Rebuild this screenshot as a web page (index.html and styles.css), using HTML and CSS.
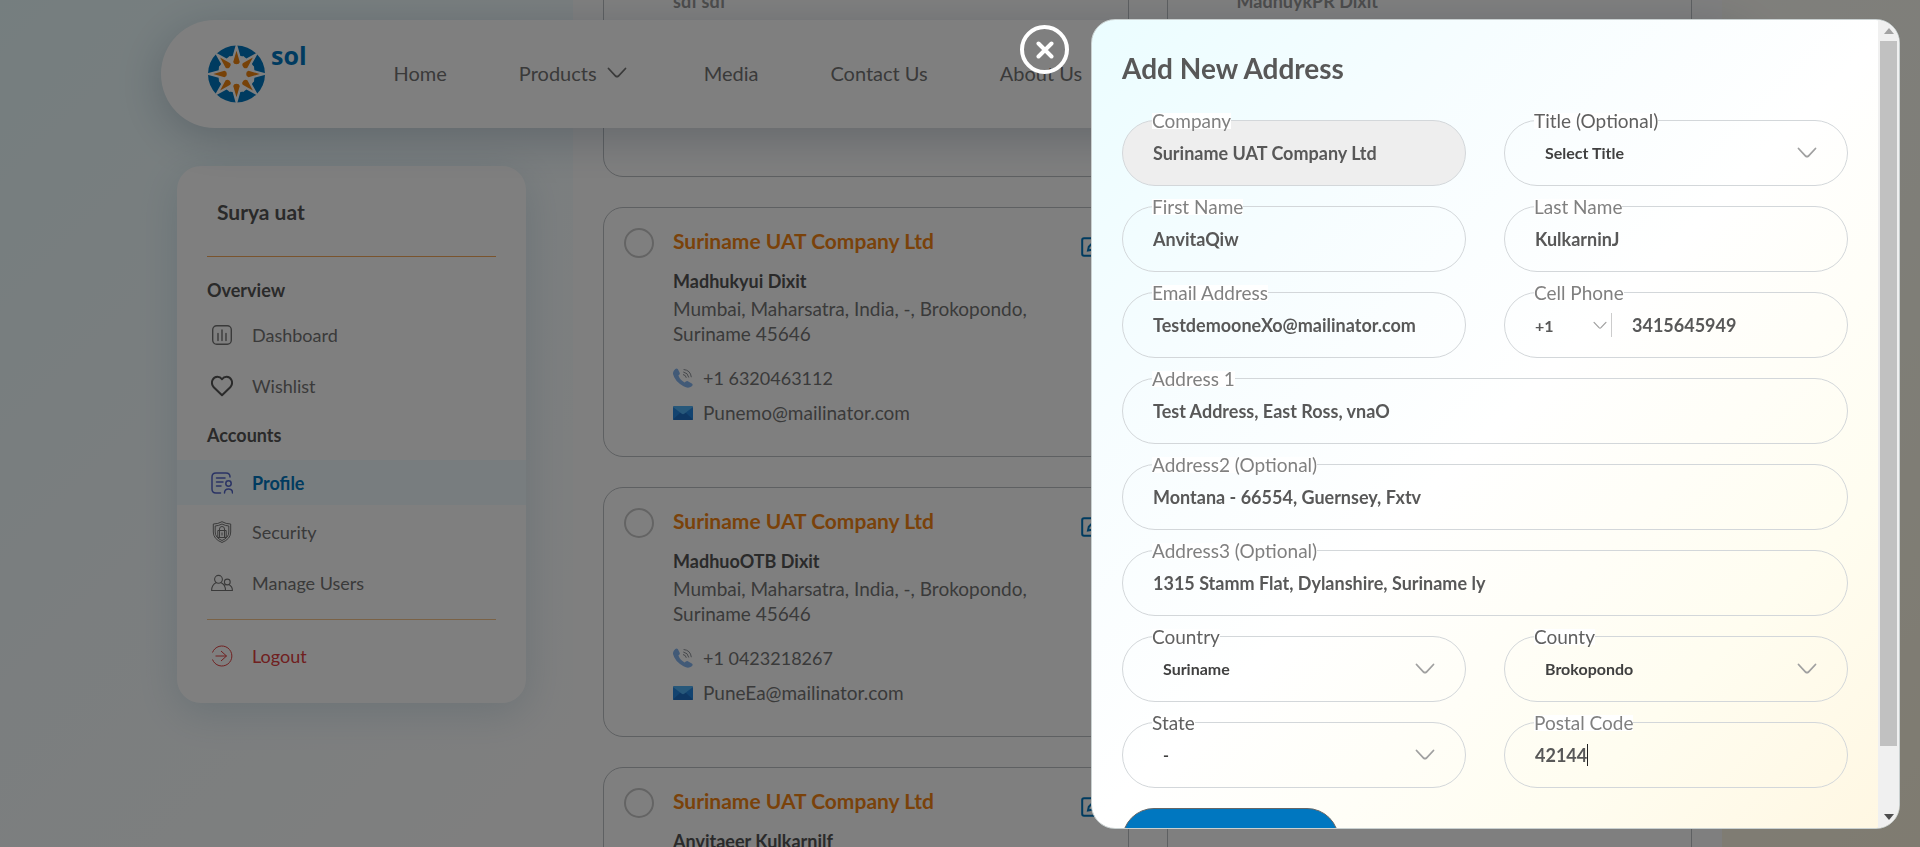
FILE: index.html
```html
<!DOCTYPE html>
<html lang="en">
<head>
<meta charset="utf-8">
<title>Sol - Address Book</title>
<link rel="stylesheet" href="styles.css">
</head>
<body>
<svg class="sprite" aria-hidden="true">
  <symbol id="chevron" viewBox="0 0 20 12"><path d="M1.5 1.5 L8.6 9 Q10 10.300 11.400 9 L18.500 1.500" fill="none" stroke="currentColor" stroke-width="1.800" stroke-linecap="round"/></symbol>
  <symbol id="phone" viewBox="0 0 20 20">
    <path d="M1 2.500 Q3 -.5 4.800 1 L6.800 5 Q7.200 6.400 5.400 7.600 Q7 12 11.600 14.600 Q13 12.700 14.400 13 L18.800 15.400 Q20.500 16.500 18.800 18.200 Q15.500 21 10.500 18.300 Q1.500 13 0 6 Q-.2 4 1 2.500Z" fill="#85b4ef"/>
    <path d="M10 6.500 Q12.800 7 13.300 9.800 M10.300 4 Q15 4.800 15.800 9.500 M10.600 1.500 Q17.500 2.200 18.300 9.200" fill="none" stroke="#8b8f96" stroke-width="1"/>
  </symbol>
  <symbol id="mail" viewBox="0 0 20 14">
    <rect width="20" height="14" rx="1.500" fill="#2487e0"/>
    <path d="M0 13.500 L8 6 h4 L20 13.500 Q19.500 14 18.500 14 h-17 Q.5 14 0 13.500Z" fill="#1c6fc4"/>
    <path d="M0 1 Q.5 0 1.500 0 h17 Q19.500 0 20 1 L11.200 7.800 Q10 8.600 8.800 7.800Z" fill="#4fb0f5"/>
  </symbol>
  <symbol id="edit" viewBox="0 0 22 20"><path d="M14 1.200 H3 Q1.200 1.200 1.200 3 V17 Q1.200 18.800 3 18.800 H17 Q18.800 18.800 18.800 17 V9" fill="none" stroke="#0077c0" stroke-width="2"/><path d="M7 13.500 L7.800 9.800 L16 1.500 L19 4.500 L10.800 12.800 Z" fill="none" stroke="#0077c0" stroke-width="2"/></symbol>
</svg>

<div class="page">
  <aside class="sidebar">
    <h2 class="user-name">Surya uat</h2>
    <nav class="side-nav">
      <h3 class="side-heading">Overview</h3>
      <a class="side-link" href="#">
        <svg class="side-icon" viewBox="0 0 22 22" fill="none" stroke="currentColor" stroke-width="1.400" stroke-linecap="round"><rect x="1.700" y="1.700" width="18.600" height="18.600" rx="4"/><path d="M7 9.500v7M11 6v10.500M15 9.500v7"/></svg>
        Dashboard</a>
      <a class="side-link" href="#">
        <svg class="side-icon" viewBox="0 0 22 22" fill="none" stroke="#555" stroke-width="2" stroke-linejoin="round"><path d="M11 20.300 L2.500 12 C-1 7.500 2 1.700 6.400 1.700 C8.500 1.700 10 2.700 11 4.200 C12 2.700 13.500 1.700 15.600 1.700 C20 1.700 23 7.500 19.500 12 Z"/></svg>
        Wishlist</a>
      <h3 class="side-heading">Accounts</h3>
      <a class="side-link side-link-active" href="#">
        <svg class="side-icon" viewBox="0 0 22 22" fill="none" stroke="#5567c9" stroke-width="1.500" stroke-linecap="round"><path d="M9.500 21H5 Q1 21 1 17V5 Q1 1 5 1H15 Q19 1 19 5"/><path d="M5.500 6H14M5.500 10H12M5.500 14H10"/><circle cx="17.500" cy="11.500" r="2.700"/><path d="M13.500 21 Q13.500 17 17.500 17 Q21.500 17 21.500 21"/></svg>
        Profile</a>
      <a class="side-link" href="#">
        <svg class="side-icon" viewBox="0 0 22 22" fill="none" stroke="currentColor" stroke-width="1"><path d="M11 .7 Q15 3 19.700 3 V11 Q19.700 18 11 21.500 Q2.300 18 2.300 11 V3 Q7 3 11 .7Z"/><path d="M11 3 Q14.500 4.800 17.800 5 V11 Q17.800 16.800 11 19.500 Q4.200 16.800 4.200 11 V5 Q7.500 4.800 11 3Z"/><path d="M6.800 9.500h8.400v7H6.800zM8.500 9.500V8Q8.500 5.500 11 5.500 Q13.500 5.500 13.500 8V9.500M8.500 9.500v7M13.500 9.500v7M11 11.500v3"/></svg>
        Security</a>
      <a class="side-link" href="#">
        <svg class="side-icon" viewBox="0 0 22 22" fill="none" stroke="currentColor" stroke-width="1.100"><circle cx="7.500" cy="7.300" r="3.900"/><circle cx="16.300" cy="10" r="2.900"/><path d="M5.300 10.500 Q.6 13 .6 18.500H21.400 Q21.400 14.500 17.800 12.600 M9.700 10.500 Q14.500 12.500 14.500 18.500 M14.900 12.600 L12.800 13.600"/></svg>
        Manage Users</a>
    </nav>
    <a class="side-link side-link-logout" href="#">
      <svg class="side-icon" viewBox="0 0 22 22" fill="none" stroke="currentColor" stroke-width="1"><path d="M1.500 7.500 A10 10 0 1 1 1.500 14.500M4.500 11H15.500M10 6 L15.500 11 L10 16"/></svg>
      Logout</a>
  </aside>

  <main class="panel">
    <article class="card">
      <input class="card-radio" type="radio" name="address" aria-label="sdf sdf">
      <div class="card-body">
        <h2 class="card-title">Suriname UAT Company Ltd</h2>
        <h3 class="card-name card-name-faded">sdf sdf</h3>
      </div>
    </article>
    <article class="card">
      <input class="card-radio" type="radio" name="address" aria-label="MadhuykPR Dixit">
      <div class="card-body">
        <h2 class="card-title">Suriname UAT Company Ltd</h2>
        <h3 class="card-name card-name-faded">MadhuykPR Dixit</h3>
      </div>
    </article>
    <article class="card">
      <input class="card-radio" type="radio" name="address" aria-label="Madhukyui Dixit">
      <div class="card-body">
        <h2 class="card-title">Suriname UAT Company Ltd</h2>
        <h3 class="card-name">Madhukyui Dixit</h3>
        <p class="card-address">Mumbai, Maharsatra, India, -, Brokopondo, Suriname 45646</p>
        <p class="card-contact card-phone"><svg class="phone-icon"><use href="#phone"/></svg>+1 6320463112</p>
        <p class="card-contact"><svg class="mail-icon"><use href="#mail"/></svg>Punemo@mailinator.com</p>
      </div>
      <button class="card-edit" type="button" aria-label="Edit"><svg class="edit-icon"><use href="#edit"/></svg></button>
    </article>
    <article class="card"></article>
    <article class="card">
      <input class="card-radio" type="radio" name="address" aria-label="MadhuoOTB Dixit">
      <div class="card-body">
        <h2 class="card-title">Suriname UAT Company Ltd</h2>
        <h3 class="card-name">MadhuoOTB Dixit</h3>
        <p class="card-address">Mumbai, Maharsatra, India, -, Brokopondo, Suriname 45646</p>
        <p class="card-contact card-phone"><svg class="phone-icon"><use href="#phone"/></svg>+1 0423218267</p>
        <p class="card-contact"><svg class="mail-icon"><use href="#mail"/></svg>PuneEa@mailinator.com</p>
      </div>
      <button class="card-edit" type="button" aria-label="Edit"><svg class="edit-icon"><use href="#edit"/></svg></button>
    </article>
    <article class="card"></article>
    <article class="card">
      <input class="card-radio" type="radio" name="address" aria-label="Anvitaeer Kulkarnilf">
      <div class="card-body">
        <h2 class="card-title">Suriname UAT Company Ltd</h2>
        <h3 class="card-name">Anvitaeer Kulkarnilf</h3>
      </div>
      <button class="card-edit" type="button" aria-label="Edit"><svg class="edit-icon"><use href="#edit"/></svg></button>
    </article>
    <article class="card"></article>
  </main>
</div>

<header class="header">
  <a class="logo" href="#">
    <svg class="logo-mark" viewBox="-30 -30 60 60" aria-hidden="true">
      <defs>
        <g id="ray">
          <path d="M0 -22 L12 -21.500 L8.500 -12 L0 -9 L-8.500 -12 L-12 -21.500Z" fill="none"/>
          <path d="M-.8 -30 H.8 L4 -18.500 L8 -18 L0 0 L-8 -18 L-4 -18.500Z" fill="#fff"/>
          <path d="M0 -24 L3.400 -12.500 Q3 -10 0 -10 Q-3 -10 -3.400 -12.500Z" fill="#ef8411"/>
        </g>
      </defs>
      <circle r="29.500" fill="#0077c0"/>
      <circle r="17.500" fill="#fff"/>
      <use href="#ray"/><use href="#ray" transform="rotate(45)"/><use href="#ray" transform="rotate(90)"/><use href="#ray" transform="rotate(135)"/>
      <use href="#ray" transform="rotate(180)"/><use href="#ray" transform="rotate(225)"/><use href="#ray" transform="rotate(270)"/><use href="#ray" transform="rotate(315)"/>
    </svg>
    <span class="logo-text">sol</span>
  </a>
  <nav class="main-nav">
    <a class="nav-link" href="#">Home</a>
    <a class="nav-link nav-link-menu" href="#">Products <svg class="nav-chevron"><use href="#chevron"/></svg></a>
    <a class="nav-link" href="#">Media</a>
    <a class="nav-link" href="#">Contact Us</a>
    <a class="nav-link" href="#">About Us</a>
  </nav>
</header>

<div class="overlay">
  <button class="close" type="button" aria-label="Close"><svg class="close-icon" viewBox="0 0 18 18"><path d="M2.500 2.500 15.500 15.500M15.500 2.500 2.500 15.500" stroke="#fff" stroke-width="4" stroke-linecap="round"/></svg></button>
  <section class="modal" role="dialog" aria-labelledby="modal-title">
    <form class="form">
      <h1 class="form-title" id="modal-title">Add New Address</h1>
      <div class="fields">
        <div class="field field-disabled">
          <label class="label" for="company">Company</label>
          <input class="input" id="company" value="Suriname UAT Company Ltd" disabled>
        </div>
        <div class="field">
          <label class="label label-dark" for="title">Title (Optional)</label>
          <select class="select" id="title"><option>Select Title</option></select>
          <svg class="select-chevron"><use href="#chevron"/></svg>
        </div>
        <div class="field">
          <label class="label" for="first">First Name</label>
          <input class="input" id="first" value="AnvitaQiw">
        </div>
        <div class="field">
          <label class="label" for="last">Last Name</label>
          <input class="input" id="last" value="KulkarninJ">
        </div>
        <div class="field">
          <label class="label" for="email">Email Address</label>
          <input class="input" id="email" value="TestdemooneXo@mailinator.com">
        </div>
        <div class="field">
          <label class="label" for="cell">Cell Phone</label>
          <div class="code">
            <select class="select select-code" aria-label="Country code"><option>+1</option></select>
            <svg class="code-chevron"><use href="#chevron"/></svg>
          </div>
          <input class="input input-phone" id="cell" value="3415645949">
        </div>
        <div class="field field-wide">
          <label class="label" for="a1">Address 1</label>
          <input class="input" id="a1" value="Test Address, East Ross, vnaO">
        </div>
        <div class="field field-wide">
          <label class="label" for="a2">Address2 (Optional)</label>
          <input class="input" id="a2" value="Montana - 66554, Guernsey, Fxtv">
        </div>
        <div class="field field-wide">
          <label class="label" for="a3">Address3 (Optional)</label>
          <input class="input" id="a3" value="1315 Stamm Flat, Dylanshire, Suriname ly">
        </div>
        <div class="field">
          <label class="label label-dark" for="country">Country</label>
          <select class="select" id="country"><option>Suriname</option></select>
          <svg class="select-chevron"><use href="#chevron"/></svg>
        </div>
        <div class="field">
          <label class="label label-dark" for="county">County</label>
          <select class="select" id="county"><option>Brokopondo</option></select>
          <svg class="select-chevron"><use href="#chevron"/></svg>
        </div>
        <div class="field">
          <label class="label label-dark" for="state">State</label>
          <select class="select" id="state"><option>-</option></select>
          <svg class="select-chevron"><use href="#chevron"/></svg>
        </div>
        <div class="field">
          <label class="label" for="postal">Postal Code</label>
          <input class="input" id="postal" value="42144">
          <span class="caret"></span>
        </div>
      </div>
      <button class="submit" type="submit" aria-label="Add address"></button>
    </form>
    <div class="scrollbar" aria-hidden="true">
      <svg class="scroll-arrow" viewBox="0 0 10 6"><path d="M5 0 10 6H0Z" fill="#a3a3a3"/></svg>
      <div class="scroll-track"><div class="scroll-thumb"></div></div>
      <svg class="scroll-arrow" viewBox="0 0 10 6"><path d="M0 0H10L5 6Z" fill="#4d4d4d"/></svg>
    </div>
  </section>
</div>
</body>
</html>
```
FILE: styles.css
```css
* {
  box-sizing: border-box;
}

body {
  margin: 0;
  height: 100vh;
  overflow: hidden;
  font-family: Lato, Carlito, sans-serif;
  font-size: 18px;
  color: #757575;
  background: linear-gradient(135deg, #ebfdff 0%, #f6fdff 25%, #fff 50%, #fffdf0 78%, #fff7e2 100%);
}

h1, h2, h3, p {
  margin: 0;
}

a {
  color: inherit;
  text-decoration: none;
}

button, input, select {
  font: inherit;
  color: inherit;
  border: 0;
  padding: 0;
  margin: 0;
  background: none;
}

.sprite {
  position: absolute;
  width: 0;
  height: 0;
}

.page {
  display: flex;
  align-items: flex-start;
  gap: 47px;
  height: 100vh;
  padding: 0 198px 0 177px;
  overflow: hidden;
}

/* Sidebar */
.sidebar {
  flex: 0 0 349px;
  margin-top: 166px;
  padding: 0 0 12px;
  border-radius: 24px;
  background: #fff;
  box-shadow: 0 10px 40px rgba(0, 80, 120, 0.14);
}

.user-name {
  margin: 0 30px;
  padding: 33px 10px 31px;
  border-bottom: 1px solid #f5a85a;
  font-size: 21px;
  line-height: 26px;
  color: #555;
}

.side-nav {
  display: flex;
  flex-direction: column;
}

.side-heading {
  margin: 22px 30px 8px;
  font-size: 18px;
  line-height: 22px;
  color: #555;
}

.side-link + .side-heading {
  margin: 13px 30px 14px;
}

.side-link {
  display: flex;
  align-items: center;
  gap: 19px;
  height: 51px;
  padding-left: 34px;
  font-size: 18px;
}

.side-link-active {
  height: 45px;
  margin-bottom: 1px;
  background: #f0faff;
  color: #0077c0;
  font-weight: bold;
}

.side-icon {
  width: 22px;
  height: 22px;
}

.side-link-logout {
  margin: 11px 30px 0;
  height: 72px;
  padding: 0 0 0 4px;
  border-top: 1px solid #f5c58c;
  color: #e04040;
}

/* Address list */
.panel {
  flex: 1;
  display: grid;
  grid-template-columns: 1fr 1fr;
  grid-auto-rows: 250px;
  gap: 30px 38px;
  margin-top: -73px;
  padding: 0 30px;
  background: #fff;
}

.card {
  display: flex;
  align-items: flex-start;
  gap: 19px;
  padding: 20px;
  border: 1px solid #bcc0c4;
  border-radius: 20px;
}

.card-radio {
  appearance: none;
  flex: 0 0 30px;
  height: 30px;
  border: 2px solid #c8c8c8;
  border-radius: 50%;
}

.card-body {
  flex: 1;
}

.card-title {
  font-size: 21px;
  line-height: 26px;
  color: #f58514;
}

.card-name {
  margin: 15px 0 3px;
  font-size: 18px;
  line-height: 24px;
  color: #555;
}

.card-name-faded {
  color: #999;
}

.card-address {
  max-width: 370px;
  margin-bottom: 14px;
  font-size: 19px;
  line-height: 25px;
}

.card-contact {
  display: flex;
  align-items: center;
  gap: 10px;
  height: 35px;
  font-size: 19px;
}

.card-phone {
  font-size: 18px;
}

.phone-icon {
  width: 20px;
  height: 20px;
}

.mail-icon {
  width: 20px;
  height: 14px;
}

.card-edit {
  padding: 9px 5px 0 0;
}

.edit-icon {
  display: block;
  width: 22px;
  height: 20px;
}

/* Header */
.header {
  position: absolute;
  top: 20px;
  left: 161px;
  right: 161px;
  display: flex;
  align-items: center;
  gap: 87px;
  height: 108px;
  padding-left: 46px;
  border-radius: 54px;
  background: #fff;
  box-shadow: 0 10px 45px rgba(20, 50, 80, 0.24);
}

.logo {
  display: flex;
  gap: 5px;
}

.logo-mark {
  width: 59px;
  height: 58px;
}

.logo-text {
  font: bold 25px/20px "Open Sans", sans-serif;
  color: #0077c0;
}

.main-nav {
  display: flex;
  gap: 72px;
  padding-bottom: 3px;
}

.nav-link {
  display: flex;
  align-items: center;
  gap: 10px;
  font-size: 20px;
  line-height: 26px;
}

.nav-link-menu {
  padding-right: 5px;
}

.nav-chevron {
  width: 20px;
  height: 12px;
}

/* Modal */
.overlay {
  position: fixed;
  inset: 0;
  display: flex;
  align-items: flex-start;
  justify-content: flex-end;
  gap: 22px;
  padding: 19px 20px 18px;
  background: rgba(0, 0, 0, 0.5);
}

.close {
  display: grid;
  place-items: center;
  width: 49px;
  height: 49px;
  margin-top: 6px;
  border: 4px solid #fff;
  border-radius: 50%;
}

.close-icon {
  width: 18px;
  height: 18px;
}

.modal {
  flex: 0 1 809px;
  display: flex;
  height: 100%;
  overflow: hidden;
  border: 1px solid #c9d0d0;
  border-radius: 24px;
  background: linear-gradient(135deg, #ebfdff 0%, #f6fdff 25%, #fff 50%, #fffdf0 78%, #fff7e2 100%);
}

.form {
  flex: 1;
  padding: 30px 30px 0;
}

.form-title {
  margin-bottom: 34px;
  font-size: 28px;
  line-height: 36px;
  color: #585858;
}

.fields {
  display: grid;
  grid-template-columns: repeat(2, minmax(0, 1fr));
  grid-auto-rows: 66px;
  gap: 20px 38px;
}

.field {
  position: relative;
  display: flex;
  align-items: center;
  padding: 0 30px;
  border: 1px solid #d3d7da;
  border-radius: 33px;
}

.field-wide {
  grid-column: span 2;
}

.field-disabled {
  background: #eee;
}

.label {
  position: absolute;
  top: -8px;
  left: 29px;
  font-size: 19px;
  line-height: 16px;
  color: #808080;
  background: #fff;
}

.label-dark {
  color: #606060;
}

.input {
  flex: 1;
  min-width: 0;
  font-size: 18px;
  font-weight: bold;
  line-height: 24px;
  color: #585858;
}

.select {
  appearance: none;
  flex: 1;
  padding: 0 0 2px 10px;
  font-size: 16px;
  font-weight: bold;
  color: #404040;
}

.select-chevron {
  width: 20px;
  height: 12px;
  color: #a0a0a0;
  pointer-events: none;
}

.code {
  display: flex;
  align-items: center;
  flex: 0 0 77px;
  height: 24px;
  padding-right: 4px;
  border-right: 1px solid #ccc;
}

.select-code {
  min-width: 0;
  padding: 0;
  color: #585858;
}

.code-chevron {
  width: 14px;
  height: 9px;
  color: #a0a0a0;
}

.input-phone {
  padding-left: 20px;
}

.caret {
  position: absolute;
  left: 82px;
  width: 1px;
  height: 22px;
  background: #222;
}

.submit {
  width: 217px;
  height: 64px;
  margin-top: 20px;
  border: 1px solid #666;
  border-radius: 32px;
  background: #0077c0;
}

.scrollbar {
  display: flex;
  flex-direction: column;
  align-items: center;
  flex: 0 0 21px;
  padding: 8px 0;
  background: #f0f0f0;
}

.scroll-arrow {
  width: 10px;
  height: 6px;
}

.scroll-track {
  flex: 1;
  width: 17px;
  margin: 7px 0;
}

.scroll-thumb {
  height: 92%;
  background: #c1c1c1;
}
```
